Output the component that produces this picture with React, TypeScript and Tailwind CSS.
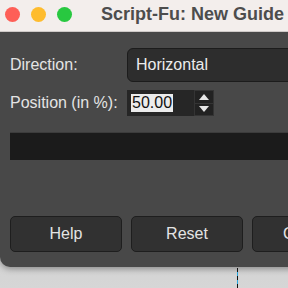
import React from "react";

const font = { fontFamily: "'Liberation Sans', Arial, sans-serif" };

const Light = ({ color }: { color: string }) => (
  <div className={`w-[15px] h-[15px] rounded-full ${color}`} />
);

export default function App() {
  return (
    <div className="w-[288px] h-[288px] overflow-hidden bg-gradient-to-b from-[#b9b9b9] to-[#d6d6d6] relative" style={font}>
      <div className="w-[400px] rounded-b-[10px] overflow-hidden bg-[#484848] shadow-[0_2px_6px_rgba(0,0,0,0.35)]">
        {/* title bar */}
        <div className="h-[32px] bg-[#f3eeec] border-b border-[#cfcac8] flex items-center pl-[5px] pb-[3px]">
          <div className="flex gap-[11px] items-center">
            <Light color="bg-[#fe5f57]" />
            <Light color="bg-[#febc2e]" />
            <Light color="bg-[#28c840]" />
          </div>
          <div className="ml-[29px] text-[18px] font-bold text-[#4d4d4d] leading-none">Script-Fu: New Guide</div>
        </div>

        <div className="pl-[10px] pt-[16px] h-[235px] flex flex-col">
          <div className="flex items-center h-[34px]">
            <div className="w-[117px] text-[16px] text-[#e4e4e4]">Direction:</div>
            <div className="flex-1 h-[34px] rounded-[6px] bg-[#2d2d2d] border border-[#1c1c1c] flex items-center pl-[8px] text-[16px] text-[#ececec]">
              Horizontal
            </div>
          </div>

          <div className="flex items-center h-[26px] mt-[8px]">
            <div className="w-[117px] text-[16px] text-[#e4e4e4]">Position (in %):</div>
            <div className="w-[67px] h-[26px] bg-[#262626] flex items-center pl-[4px]">
              <span className="bg-[#ececec] text-[#111] text-[16px] leading-[18px] px-[1px]">50.00</span>
            </div>
            <div className="w-[20px] h-[26px] bg-[#222] border border-[#343434] flex flex-col">
              <div className="flex-1 flex items-center justify-center border-b border-[#343434]">
                <svg width="10" height="6" viewBox="0 0 10 6"><path d="M5 0 L10 6 L0 6 Z" fill="#e6e6e6" /></svg>
              </div>
              <div className="flex-1 flex items-center justify-center">
                <svg width="10" height="6" viewBox="0 0 10 6"><path d="M0 0 L10 0 L5 6 Z" fill="#e6e6e6" /></svg>
              </div>
            </div>
          </div>

          <div className="mt-[16px] h-[28px] bg-[#1b1b1b] border-t border-[#3c3c3c]" />

          <div className="mt-[56px] flex gap-[9px]">
            {["Help", "Reset", "Cancel"].map((b) => (
              <div key={b} className="w-[112px] h-[36px] shrink-0 rounded-[5px] bg-[#313131] border border-[#1e1e1e] flex items-center justify-center text-[16px] text-[#e4e4e4]">
                {b}
              </div>
            ))}
          </div>
        </div>
      </div>
      <div className="absolute left-[237px] top-[268px] w-[1px] h-[20px] bg-[repeating-linear-gradient(to_bottom,#111_0px,#111_4px,#29a9e0_4px,#29a9e0_8px)]" />
    </div>
  );
}
